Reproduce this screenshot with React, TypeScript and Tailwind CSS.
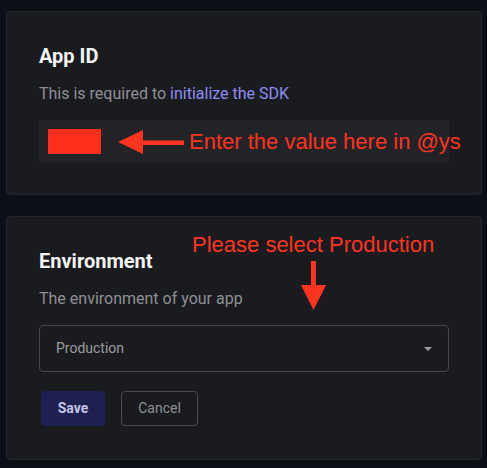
import React from 'react';

const ui = { fontFamily: 'Roboto, "Noto Sans", sans-serif' };
const note = { fontFamily: '"Liberation Sans", Arial, sans-serif' };

function LeftArrow() {
  return (
    <svg width="66" height="24" viewBox="0 0 66 24" className="shrink-0">
      <path d="M0 12 L25 0 L25 10.5 L66 10.5 L66 15 L25 15 L25 24 Z" fill="#ff3320" />
    </svg>
  );
}

function DownArrow() {
  return (
    <svg width="25" height="49" viewBox="0 0 25 49">
      <path d="M10 0 L15 0 L15 24 L25 24 L12.5 49 L0 24 L10 24 Z" fill="#ff3320" />
    </svg>
  );
}

export default function App() {
  return (
    <div className="min-h-[468px] w-[487px] bg-[#0c0f16] pt-[11px] pl-[6px] pr-[5px]" style={ui}>
      {/* App ID */}
      <div className="rounded-[4px] border border-[#26272c] bg-[#1a1b1f] pl-[32px] pr-[32px] pt-[30px] pb-[31px]">
        <h2 className="text-[20px] leading-[28px] font-bold text-[#f4f4f5]">App ID</h2>
        <p className="mt-3 text-[16px] leading-[24px] text-[#8f9095]">
          This is required to <span className="text-[#8c8ff2]">initialize the SDK</span>
        </p>
        <div className="mt-[14px] flex h-[43px] w-[410px] items-center bg-[#222327] pl-[9px]">
          <div className="h-[25px] w-[53px] shrink-0 bg-[#ff2e1a]" />
          <div className="ml-[17px]">
            <LeftArrow />
          </div>
          <span className="ml-[5px] whitespace-nowrap text-[22px] leading-none text-[#ff3320]" style={note}>
            Enter the value here in @ys
          </span>
        </div>
      </div>

      {/* Environment */}
      <div className="relative mt-[21px] rounded-[4px] border border-[#26272c] bg-[#1a1b1f] pl-[32px] pr-[32px] pt-[30px] pb-[33px]">
        <h2 className="text-[20px] leading-[28px] font-bold text-[#f4f4f5]">Environment</h2>
        <p className="mt-3 text-[16px] leading-[24px] text-[#8f9095]">The environment of your app</p>
        <div className="mt-[14px] flex h-[47px] w-[410px] items-center justify-between rounded-[4px] border border-[#47484d] pl-[16px] pr-[16px]">
          <span className="text-[14px] text-[#9a9ba0]">Production</span>
          <svg width="8" height="4" viewBox="0 0 8 4">
            <path d="M0 0 L8 0 L4 4 Z" fill="#9a9ba0" />
          </svg>
        </div>
        <div className="mt-[19px] flex gap-4 pl-[2px]">
          <button className="h-[35px] w-[64px] rounded-[4px] bg-[#1e2052] text-[14px] font-bold text-[#c5c6e6]">Save</button>
          <button className="h-[35px] w-[77px] rounded-[4px] border border-[#4a4b50] text-[14px] text-[#8f9095]">Cancel</button>
        </div>

        {/* annotation */}
        <span className="absolute left-[185px] top-[17px] whitespace-nowrap text-[22px] leading-none text-[#ff3320]" style={note}>
          Please select Production
        </span>
        <div className="absolute left-[294px] top-[44px]">
          <DownArrow />
        </div>
      </div>
    </div>
  );
}
